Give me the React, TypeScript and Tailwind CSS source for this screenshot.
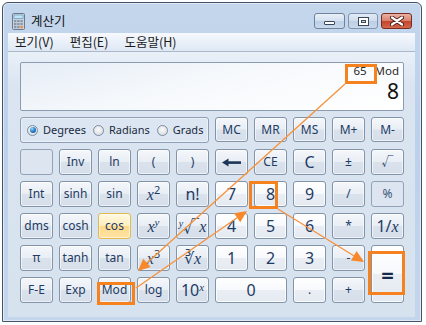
import React from "react";

type Kind = "fn" | "num" | "hot" | "dis";

const styles: Record<Kind, string> = {
  fn: "border-[#8393a8] bg-[linear-gradient(to_bottom,#f4f7fb_0%,#e9eef5_49%,#dae2ec_51%,#d5deea_100%)] shadow-[inset_0_0_0_1px_rgba(255,255,255,0.6)] text-[#1e3b64]",
  num: "border-[#8393a8] bg-[linear-gradient(to_bottom,#ffffff_0%,#f7f9fc_49%,#eaeef4_51%,#e5eaf2_100%)] shadow-[inset_0_0_0_1px_rgba(255,255,255,0.8)] text-[#1e3b64]",
  hot: "border-[#e2b94a] bg-[linear-gradient(to_bottom,#fff9e4_0%,#ffeebb_49%,#ffd98b_51%,#ffe3a2_100%)] shadow-[inset_0_0_0_1px_rgba(255,255,255,0.5)] text-[#1e3b64]",
  dis: "border-[#93a2b6] bg-[#dce5f0] text-[#3d5577]",
};

type B = { l: React.ReactNode; k: Kind; cls?: string; t?: "s" | "n" | "m" };

const X = ({ c }: { c: string }) => <i className="font-['Liberation_Serif'] italic">{c}</i>;

const Back = () => (
  <svg width="19" height="9" viewBox="0 0 19 9">
    <polygon points="0,4.5 6.5,0.5 6.5,8.5" fill="#1e3656" />
    <rect x="5" y="3.3" width="14" height="2.6" fill="#1e3656" />
  </svg>
);

const rows: B[] = [
  { l: "", k: "dis" },
  { l: "Inv", k: "fn" },
  { l: "ln", k: "fn" },
  { l: "(", k: "fn" },
  { l: ")", k: "fn" },
  { l: <Back />, k: "fn" },
  { l: "CE", k: "fn" },
  { l: "C", k: "fn", t: "n" },
  { l: "±", k: "fn" },
  { l: "√", k: "fn" },

  { l: "Int", k: "fn" },
  { l: "sinh", k: "fn" },
  { l: "sin", k: "fn" },
  { l: <span><X c="x" /><sup className="text-[11px] not-italic">2</sup></span>, k: "fn", t: "m" },
  { l: "n!", k: "fn", t: "n" },
  { l: "7", k: "num", t: "n" },
  { l: "8", k: "num", t: "n" },
  { l: "9", k: "num", t: "n" },
  { l: "/", k: "fn" },
  { l: "%", k: "dis" },

  { l: "dms", k: "fn" },
  { l: "cosh", k: "fn" },
  { l: "cos", k: "hot" },
  { l: <span><X c="x" /><sup className="text-[11px]"><X c="y" /></sup></span>, k: "fn", t: "m" },
  { l: <span><sup className="text-[10px]"><X c="y" /></sup>√<X c="x" /></span>, k: "fn", t: "m" },
  { l: "4", k: "num", t: "n" },
  { l: "5", k: "num", t: "n" },
  { l: "6", k: "num", t: "n" },
  { l: "*", k: "fn" },
  { l: <span>1/<X c="x" /></span>, k: "fn", t: "m" },

  { l: "π", k: "fn" },
  { l: "tanh", k: "fn" },
  { l: "tan", k: "fn" },
  { l: <span><X c="x" /><sup className="text-[11px]">3</sup></span>, k: "fn", t: "m" },
  { l: <span>∛<X c="x" /></span>, k: "fn", t: "m" },
  { l: "1", k: "num", t: "n" },
  { l: "2", k: "num", t: "n" },
  { l: "3", k: "num", t: "n" },
  { l: "-", k: "fn" },
  { l: <span className="text-[22px] font-bold leading-none text-[#16294a]">=</span>, k: "num", cls: "row-span-2" },

  { l: "F-E", k: "fn" },
  { l: "Exp", k: "fn" },
  { l: "Mod", k: "fn" },
  { l: "log", k: "fn" },
  { l: <span>10<sup className="text-[11px]"><X c="x" /></sup></span>, k: "fn", t: "m" },
  { l: "0", k: "num", t: "n", cls: "col-span-2" },
  { l: ".", k: "num" },
  { l: "+", k: "fn" },
];

const Btn = ({ b }: { b: B }) => {
  const size =
    b.t === "n" ? "text-[16px]" : b.t === "m" ? "text-[16px]" : "text-[12px]";
  return (
    <div
      className={`flex items-center justify-center rounded-[3px] border leading-none ${styles[b.k]} ${size} ${b.cls ?? ""}`}
    >
      {b.l}
    </div>
  );
};

const Radio = ({ on, label }: { on?: boolean; label: string }) => (
  <div className="flex items-center gap-[5px]">
    <div className="w-[11px] h-[11px] rounded-full border border-[#7d8ca1] bg-[radial-gradient(circle_at_50%_40%,#fafafa_0%,#e2e5ea_60%,#c9ced6_100%)] flex items-center justify-center">
      {on && (
        <div className="w-[6px] h-[6px] rounded-full bg-[radial-gradient(circle_at_35%_30%,#9ad8ff_0%,#2f86cf_45%,#0b3f7a_100%)]" />
      )}
    </div>
    <span className="text-[11px] text-[#1b2a40]">{label}</span>
  </div>
);

const CalcIcon = () => (
  <svg width="13" height="17" viewBox="0 0 13 17">
    <rect x="0.5" y="0.5" width="12" height="16" rx="1" fill="#c9d1dc" stroke="#6d7a8c" />
    <rect x="2" y="2" width="9" height="3.5" fill="#bfe3f7" stroke="#5b8fb5" strokeWidth="0.6" />
    {[0, 1, 2].map((r) =>
      [0, 1, 2].map((c) => (
        <rect key={`${r}-${c}`} x={2 + c * 3.2} y={7 + r * 3} width="2.4" height="2.2" fill={c === 2 && r === 2 ? "#e98b3a" : "#8a97a8"} />
      ))
    )}
  </svg>
);

const arrows = [
  { x1: 345, y1: 84, x2: 138, y2: 271 },
  { x1: 136, y1: 288, x2: 247, y2: 211 },
  { x1: 278, y1: 209, x2: 364, y2: 262 },
];

function headPts(a: { x1: number; y1: number; x2: number; y2: number }) {
  const dx = a.x2 - a.x1;
  const dy = a.y2 - a.y1;
  const len = Math.hypot(dx, dy);
  const ux = dx / len;
  const uy = dy / len;
  const L = 12;
  const W = 5.5;
  const bx = a.x2 - ux * L;
  const by = a.y2 - uy * L;
  return {
    pts: `${a.x2},${a.y2} ${bx - uy * W},${by + ux * W} ${bx + uy * W},${by - ux * W}`,
    bx,
    by,
  };
}

export default function App() {
  return (
    <div className="relative w-[426px] h-[325px] overflow-hidden bg-white font-['Noto_Sans','Noto_Sans_CJK_KR',sans-serif]">
      <div className="ml-[2px] mt-[2px] w-[420px] h-[320px] border border-[#46536a] rounded-t-[6px] bg-[linear-gradient(to_bottom,#c3d6ec_0%,#bcd1ea_40%,#c3d6ec_100%)] flex flex-col pl-[5px] pr-[6px] pb-[4px] shadow-[inset_0_0_0_1px_rgba(255,255,255,0.5)]">
        {/* title bar */}
        <div className="h-[30px] flex items-start pt-[10px]">
          <div className="ml-[4px] flex items-center h-[17px]">
            <CalcIcon />
          </div>
          <div className="ml-[6px] h-[17px] flex items-center text-[12.5px] text-[#111] font-['Noto_Sans_CJK_KR',sans-serif]">
            계산기
          </div>
          <div className="ml-auto mr-[3px] flex items-start gap-[3px]">
            <div className="w-[31px] h-[16px] rounded-[3px] border border-[#6f8299] bg-[linear-gradient(to_bottom,#e9f0f8_0%,#d3e0ef_50%,#bccfe6_51%,#c9d9ec_100%)] flex items-end justify-center pb-[3px]">
              <div className="w-[11px] h-[4px] bg-white border border-[#3b4656] rounded-[1px]" />
            </div>
            <div className="w-[30px] h-[16px] rounded-[3px] border border-[#8094ad] bg-[linear-gradient(to_bottom,#e2ebf6_0%,#cfdcec_50%,#bdcfe5_51%,#c8d8eb_100%)] flex items-center justify-center">
              <div className="w-[11px] h-[9px] border border-[#3b4656] bg-white flex items-center justify-center">
                <div className="w-[5px] h-[3px] border border-[#3b4656] bg-[#c9d4e2]" />
              </div>
            </div>
            <div className="w-[31px] h-[16px] rounded-[3px] border border-[#7a2c22] bg-[linear-gradient(to_bottom,#eab3a5_0%,#d9806b_50%,#c2452d_51%,#d2664b_100%)] flex items-center justify-center">
              <svg width="14" height="10" viewBox="0 0 14 10">
                <path d="M2 1.5 L12 8.5 M12 1.5 L2 8.5" stroke="#4a1d16" strokeWidth="4" strokeLinecap="round" />
                <path d="M2 1.5 L12 8.5 M12 1.5 L2 8.5" stroke="#ffffff" strokeWidth="2.2" strokeLinecap="round" />
              </svg>
            </div>
          </div>
        </div>
        {/* menu */}
        <div className="h-[19px] flex items-center gap-[16px] pl-[7px] bg-[linear-gradient(to_bottom,#f6f9fd,#dee8f4)] border-b border-[#aab8ca] text-[12.5px] text-[#1a1a1a] font-['Noto_Sans_CJK_KR',sans-serif]">
          <span>보기(V)</span>
          <span>편집(E)</span>
          <span>도움말(H)</span>
        </div>
        {/* client */}
        <div className="flex-1 bg-[linear-gradient(to_bottom,#e9f0f8_0%,#dbe5f2_12%,#d7e2ef_100%)] pl-[12px] pr-[11px] pt-[10px]">
          <div className="h-[49px] rounded-[2px] border border-[#8b9cb2] bg-[linear-gradient(165deg,#e6edf6_0%,#f6f9fc_45%,#ffffff_100%)] flex flex-col items-end pr-[4px]">
            <div className="flex items-center gap-[8px] h-[16px] leading-[16px] text-[11.5px] text-[#2a2a2a]">
              <span>65</span>
              <span>Mod</span>
            </div>
            <div className="mt-[1px] h-[22px] leading-[22px] text-[21px] text-[#111]">8</div>
          </div>
          <div className="mt-[6px] grid grid-cols-[repeat(10,33px)] grid-rows-[26px_26px_26px_26px_26px_26px] gap-x-[6px] gap-y-[6px]">
            <div className="col-span-5 rounded-[3px] border border-[#8fa0b6] bg-[#dce6f2] flex items-center pl-[6px] gap-[7px] shadow-[inset_0_0_0_1px_rgba(255,255,255,0.4)]">
              <Radio on label="Degrees" />
              <Radio label="Radians" />
              <Radio label="Grads" />
            </div>
            {["MC", "MR", "MS", "M+", "M-"].map((m) => (
              <div
                key={m}
                className={`h-[25px] flex items-center justify-center rounded-[3px] border leading-none text-[12px] ${styles.fn}`}
              >
                {m}
              </div>
            ))}
            {rows.map((b, i) => (
              <Btn key={i} b={b} />
            ))}
          </div>
        </div>
      </div>

      {/* annotation overlay */}
      <svg className="absolute left-0 top-0 pointer-events-none" width="426" height="325" viewBox="0 0 426 325">
        <rect x="346.5" y="65.5" width="29" height="17" fill="none" stroke="#f5821f" strokeWidth="3" />
        <rect x="250.5" y="182.5" width="26" height="25" fill="none" stroke="#f5821f" strokeWidth="3" />
        <rect x="98.5" y="283.5" width="35" height="20" fill="none" stroke="#f5821f" strokeWidth="3" />
        <rect x="369.5" y="252.5" width="34" height="41" fill="none" stroke="#f5821f" strokeWidth="3" />
        {arrows.map((a, i) => {
          const h = headPts(a);
          return (
            <g key={i}>
              <line x1={a.x1} y1={a.y1} x2={h.bx} y2={h.by} stroke="#f7923a" strokeWidth="1.3" />
              <polygon points={h.pts} fill="#f7892a" />
            </g>
          );
        })}
      </svg>
    </div>
  );
}
